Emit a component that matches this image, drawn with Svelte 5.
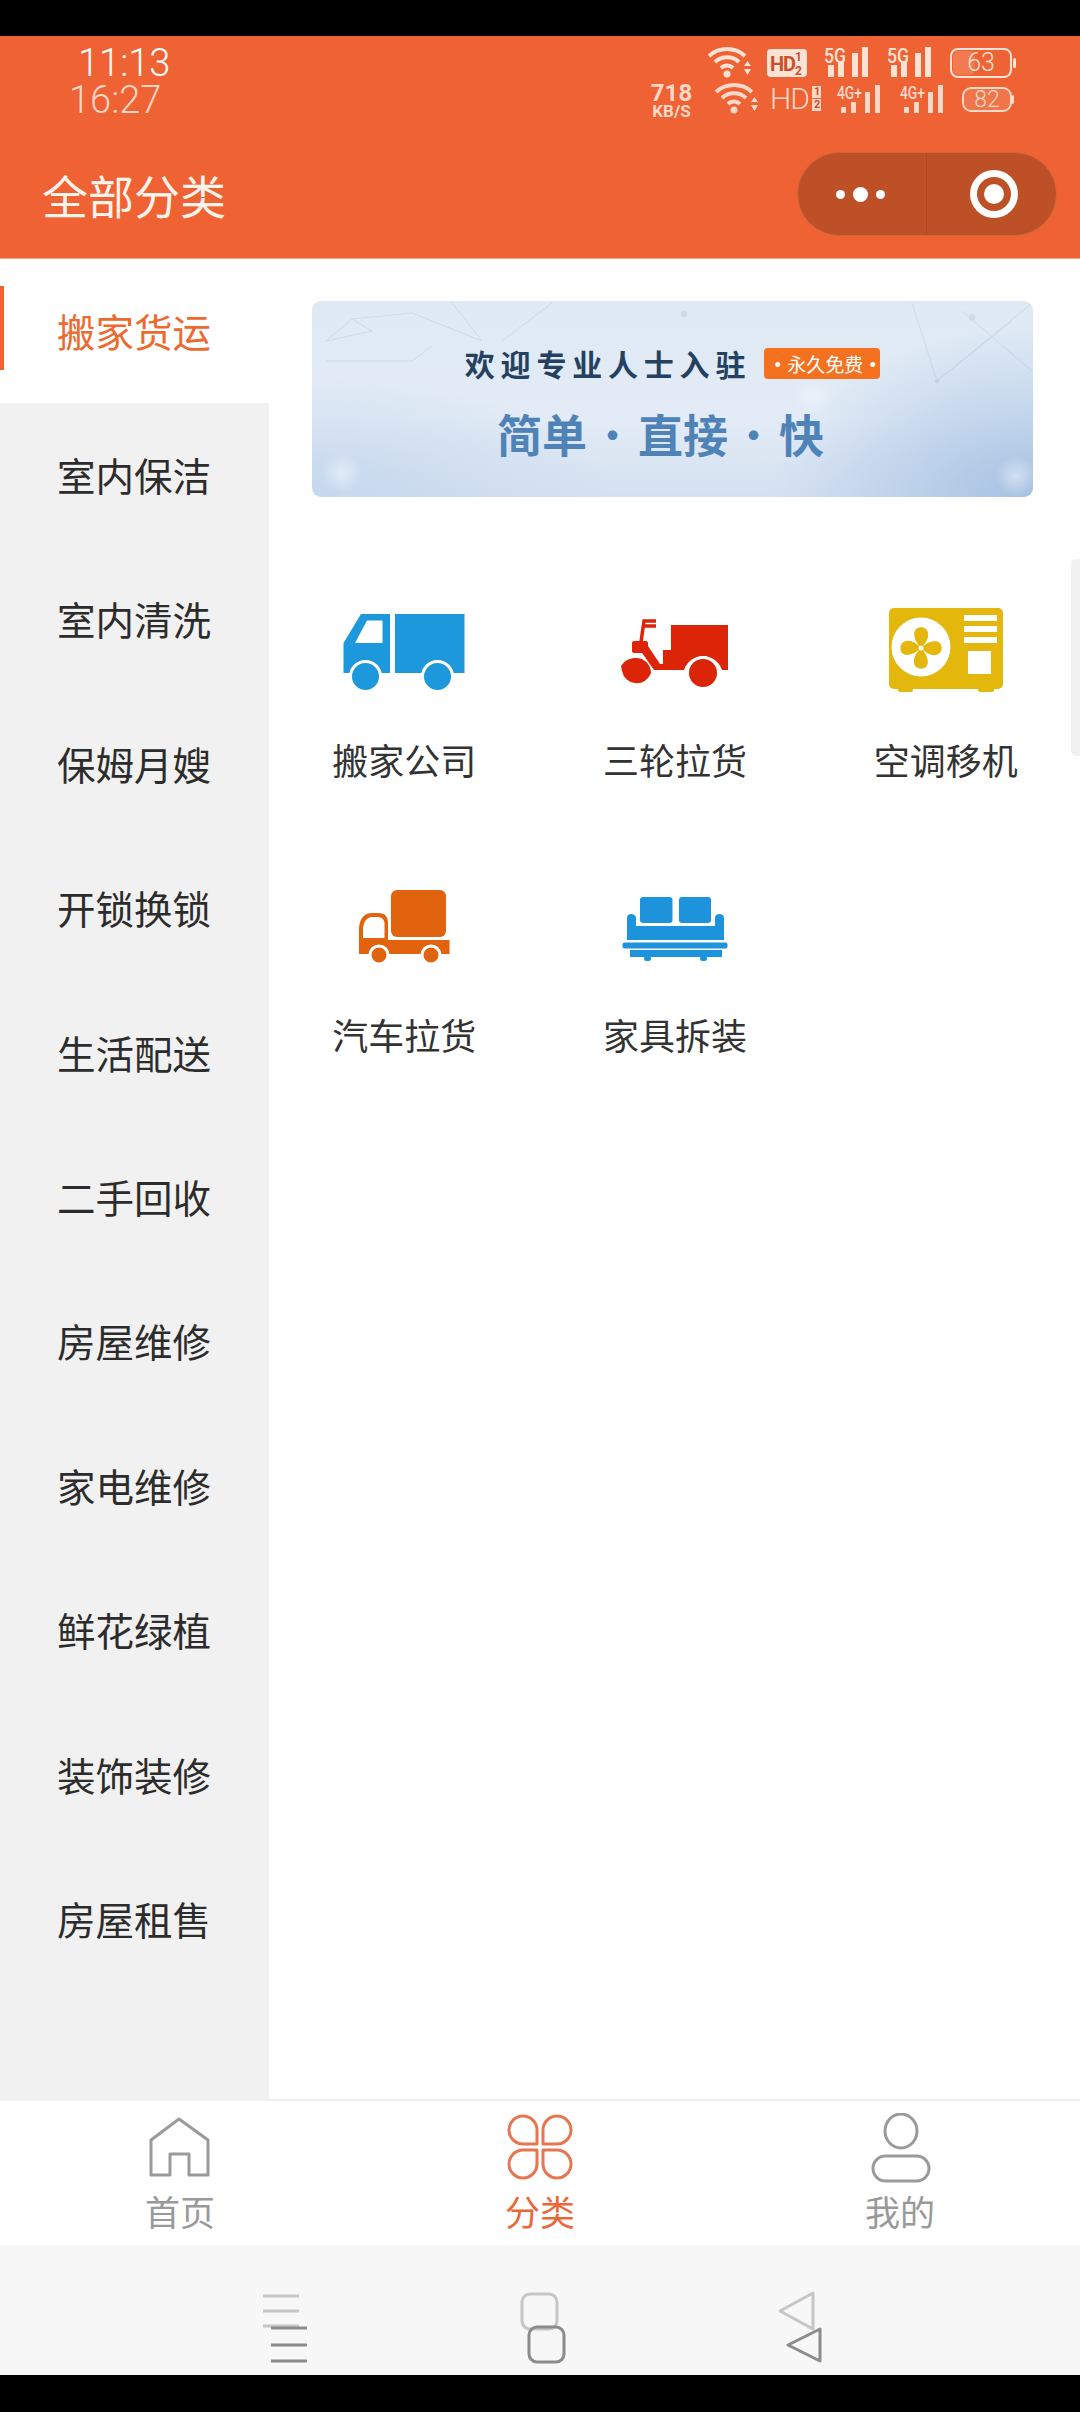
<script>
  const cats = ['搬家货运','室内保洁','室内清洗','保姆月嫂','开锁换锁','生活配送','二手回收','房屋维修','家电维修','鲜花绿植','装饰装修','房屋租售'];
</script>

{#snippet wifi()}
  <svg class="ic" width="44" height="36" viewBox="0 0 44 36">
    <g fill="none" stroke="currentColor" stroke-width="4">
      <path d="M1 11A27 27 0 0 1 37 11"/>
      <path d="M7 17A17.500 17.500 0 0 1 31 17"/>
      <path d="M13 23A8.500 8.500 0 0 1 25 23"/>
    </g>
    <circle cx="19" cy="29" r="3.500" fill="currentColor"/>
    <path d="M36 21H43L39.500 16ZM36 24H43L39.500 30Z" fill="currentColor"/>
  </svg>
{/snippet}

{#snippet signal(label, w, fs, tl, bw, tops)}
  <svg class="ic" width={w} height="36" viewBox="0 0 {w} 36">
    <text class="sig" x="0" y="18" font-size={fs} textLength={tl} lengthAdjust="spacingAndGlyphs">{label}</text>
    <g fill="currentColor">
      <rect x="4" y={tops[0]} width={bw} height={32 - tops[0]}/>
      <rect x="14" y={tops[1]} width={bw} height={32 - tops[1]}/>
      <rect x="28" y={tops[2]} width={bw} height={32 - tops[2]}/>
      <rect x="38" y={tops[3]} width={bw} height={32 - tops[3]}/>
    </g>
  </svg>
{/snippet}

<div class="page">
  <div class="topblack"></div>

  <header class="head">
    <div class="status">
      <div class="times">
        <span class="t1">11:13</span>
        <span class="t2">16:27</span>
      </div>
      <div class="sysicons">
        <div class="sysrow r1">
          {@render wifi()}
          <svg class="ic hd" width="40" height="36" viewBox="0 0 40 36">
            <rect x="0" y="4" width="40" height="28" rx="4" fill="#fde3d6"/>
            <text class="hdt" x="3" y="26" fill="#c9502a">HD</text>
            <text class="hds" x="28" y="16" fill="#c9502a">1</text>
            <text class="hds" x="28" y="30" fill="#c9502a">2</text>
          </svg>
          {@render signal('5G', 46, 21, 22, 6, [20, 17, 8, 2])}
          {@render signal('5G', 46, 21, 22, 6, [20, 17, 8, 2])}
          <svg class="ic" width="66" height="36" viewBox="0 0 66 36">
            <rect x="1" y="4" width="60" height="28" rx="7" fill="none" stroke="currentColor" stroke-width="2"/>
            <rect x="3" y="6" width="22" height="24" rx="5" fill="#fde3d6" opacity=".18"/>
            <rect x="63" y="13" width="3" height="10" rx="1.500" fill="currentColor"/>
            <text class="bat" x="31" y="26">63</text>
          </svg>
        </div>
        <div class="sysrow r2">
          <div class="speed"><b>718</b><small>KB/S</small></div>
          <span class="m23">{@render wifi()}</span>
          <span class="hd2">HD<i><em>1</em><em>2</em></i></span>
          <span class="m17">{@render signal('4G+', 43, 18, 25, 5, [26, 21, 11, 4])}</span>
          <span class="m20">{@render signal('4G+', 43, 18, 25, 5, [26, 21, 11, 4])}</span>
          <svg class="ic m19" width="52" height="36" viewBox="0 0 52 36">
            <rect x="1" y="7" width="48" height="23" rx="8" fill="#fde3d6" fill-opacity=".15" stroke="currentColor" stroke-width="2"/>
            <rect x="49" y="14" width="3" height="9" rx="1.500" fill="currentColor"/>
            <text class="bat small" x="25" y="26">82</text>
          </svg>
        </div>
      </div>
    </div>
    <div class="titlebar">
      <h1>全部分类</h1>
      <div class="pill">
        <div class="pillpart dots"><i></i><i class="big"></i><i></i></div>
        <div class="pillpart target"><span class="ring"></span></div>
      </div>
    </div>
  </header>

  <div class="body">
    <nav class="side">
      {#each cats as c, i}
        <div class="cat" class:on={i === 0}>{c}</div>
      {/each}
    </nav>

    <main class="main">
      <div class="scrollbar"></div>
      <div class="banner">
        <svg class="net" width="721" height="196" viewBox="0 0 721 196" fill="none" stroke="#8fa6bf" stroke-width="1" opacity=".22">
          <path d="M14 40L40 18L100 12L170 40L140 2M14 60H100L120 45M40 18L60 30L14 40M190 40L240 2"/>
          <path d="M600 2L625 80L720 2M650 10L720 70M625 80L700 20"/>
          <circle cx="660" cy="16" r="3" fill="#8fa6bf"/><circle cx="372" cy="13" r="3" fill="#8fa6bf"/><circle cx="625" cy="80" r="2" fill="#8fa6bf"/>
        </svg>
        <div class="bline">
          <span class="bh">欢迎专业人士入驻</span>
          <span class="tag"><i>·</i>永久免费<i>·</i></span>
        </div>
        <div class="bsub"><span>简单</span><span class="mid">·</span><span>直接</span><span class="mid">·</span><span>快</span></div>
      </div>

      <div class="grid">
        <div class="item">
          <svg width="130" height="100" viewBox="0 0 130 100">
            <g fill="#1e98dc">
              <path d="M4.500 43L22 14H51V73H4.500Z"/>
              <rect x="56" y="14" width="69.500" height="59"/>
            </g>
            <path d="M16 43L28 20.500H43.500V43Z" fill="#fff"/>
            <g fill="#1e98dc" stroke="#fff" stroke-width="3">
              <circle cx="26.500" cy="76.500" r="15"/>
              <circle cx="98.500" cy="76.500" r="15"/>
            </g>
          </svg>
          <span>搬家公司</span>
        </div>
        <div class="item">
          <svg width="130" height="100" viewBox="0 0 130 100">
            <g fill="#dc2508">
              <path d="M38 46L50 64H53V50H61V25H118V70H112A20 20 0 0 0 74 70H44L30 50Z"/>
              <rect x="22" y="41" width="16" height="12" rx="2"/>
              <path d="M11 66C15 60 20 58 26 58C35 58 41 65 41 73A15 15 0 0 1 12 71Z"/>
            </g>
            <path d="M46 21H34L31 42M35 26H46" fill="none" stroke="#dc2508" stroke-width="3.500"/>
            <circle cx="93" cy="73" r="15.500" fill="#dc2508" stroke="#fff" stroke-width="3"/>
          </svg>
          <span>三轮拉货</span>
        </div>
        <div class="item">
          <svg width="130" height="100" viewBox="0 0 130 100">
            <g fill="#e3b70b">
              <rect x="8" y="8" width="114" height="81" rx="5"/>
              <rect x="17" y="85" width="15" height="7" rx="2"/>
              <rect x="97" y="85" width="16" height="7" rx="2"/>
            </g>
            <circle cx="40" cy="47" r="29.500" fill="#fff"/>
            <g fill="#e3b70b">
              <path d="M40 48C34 42 31 33 35 29C39 26 46 27 47 33C48 39 44 44 40 48Z"/>
              <path d="M40 48C34 42 31 33 35 29C39 26 46 27 47 33C48 39 44 44 40 48Z" transform="rotate(90 40 48)"/>
              <path d="M40 48C34 42 31 33 35 29C39 26 46 27 47 33C48 39 44 44 40 48Z" transform="rotate(180 40 48)"/>
              <path d="M40 48C34 42 31 33 35 29C39 26 46 27 47 33C48 39 44 44 40 48Z" transform="rotate(270 40 48)"/>
            </g>
            <circle cx="40" cy="48" r="2.500" fill="#fff"/>
            <g fill="#fff">
              <rect x="83" y="15" width="33" height="6"/>
              <rect x="83" y="26" width="33" height="6"/>
              <rect x="83" y="37" width="33" height="6"/>
              <rect x="87" y="51" width="23" height="23"/>
            </g>
          </svg>
          <span>空调移机</span>
        </div>
        <div class="item">
          <svg width="130" height="100" viewBox="0 0 130 100">
            <g fill="#e2630e">
              <rect x="52" y="15" width="55" height="47" rx="6"/>
              <path d="M20 79V55C20 44 25 38 33 38H40C46 38 49 42 49 48V65H110.500V79Z"/>
            </g>
            <path d="M24 63V55C24 47 28 42 33 42H39C43 42 45.500 45 45.500 49V63Z" fill="#fff"/>
            <g fill="#e2630e" stroke="#fff" stroke-width="3">
              <circle cx="40" cy="80" r="9"/>
              <circle cx="92" cy="80" r="9"/>
            </g>
          </svg>
          <span>汽车拉货</span>
        </div>
        <div class="item">
          <svg width="130" height="100" viewBox="0 0 130 100" fill="#1d93dc">
            <rect x="30" y="22" width="32.500" height="26" rx="3"/>
            <rect x="69" y="22" width="32" height="26" rx="3"/>
            <path d="M17 43C17 40 19 39 21 39S26 40 26 43V51H105V43C105 40 107 39 109.500 39S114 40 114 43V65H17Z"/>
            <rect x="12.500" y="67.500" width="105" height="6" rx="2"/>
            <rect x="20" y="75" width="92" height="7"/>
            <rect x="34" y="81" width="7" height="5" rx="2.500"/>
            <rect x="90" y="81" width="7" height="5" rx="2.500"/>
          </svg>
          <span>家具拆装</span>
        </div>
      </div>
    </main>
  </div>

  <footer class="tabs">
    <div class="tab">
      <svg width="80" height="72" viewBox="0 0 80 72" fill="none" stroke="#9a9a9a" stroke-width="3" stroke-linejoin="round">
        <path d="M11 62V27L39 6L68 27V62H49V41H30V62Z"/>
      </svg>
      <span>首页</span>
    </div>
    <div class="tab active">
      <svg width="80" height="72" viewBox="0 0 80 72" fill="none" stroke="#e5764f" stroke-width="3" stroke-linejoin="round">
        <path d="M37 31H23A14 14 0 1 1 37 17Z"/>
        <path d="M43 31H57A14 14 0 1 0 43 17Z"/>
        <path d="M37 37H23A14 14 0 1 0 37 51Z"/>
        <path d="M43 37H57A14 14 0 1 1 43 51Z"/>
      </svg>
      <span>分类</span>
    </div>
    <div class="tab">
      <svg width="80" height="72" viewBox="0 0 80 72" fill="none" stroke="#9a9a9a" stroke-width="3">
        <ellipse cx="41" cy="18" rx="16" ry="17"/>
        <rect x="13" y="43" width="56" height="25" rx="12.500"/>
      </svg>
      <span>我的</span>
    </div>
  </footer>

  <div class="navbar">
    <svg width="60" height="80" viewBox="0 0 60 80" fill="none" stroke-width="3">
      <path d="M8 7H44M8 22H44M8 37H44" stroke="#c6c6c6"/>
      <path d="M16 39H52M16 56H52M16 72H52" stroke="#8c8c8c"/>
    </svg>
    <svg width="60" height="80" viewBox="0 0 60 80" fill="none" stroke-width="3">
      <rect x="9" y="5" width="35" height="35" rx="8" stroke="#c6c6c6"/>
      <rect x="16" y="38" width="35" height="35" rx="8" stroke="#8c8c8c"/>
    </svg>
    <svg width="60" height="80" viewBox="0 0 60 80" fill="none" stroke-width="3" stroke-linejoin="round">
      <path d="M10 22L43 4V40Z" stroke="#c6c6c6"/>
      <path d="M18 56L50 40V72Z" stroke="#8c8c8c"/>
    </svg>
  </div>

  <div class="botblack"></div>
</div>

<style>
  :global(body) { margin: 0; background: #000; }
  .page {
    width: 1080px; height: 2412px; display: flex; flex-direction: column; overflow: hidden;
    background: #fff; color: #333;
    font-family: "Noto Sans CJK SC", "Noto Sans", sans-serif;
  }
  .topblack { height: 36px; background: #000; flex: none; }
  .botblack { flex: 1; background: #000; }

  .head { height: 223px; flex: none; background: #ef6233; display: flex; flex-direction: column; color: #fde3d6; box-sizing: border-box; border-bottom: 1px solid #f6a88c; }
  .status { height: 96px; display: flex; justify-content: space-between; padding-top: 9px; box-sizing: border-box; }
  .times { display: flex; flex-direction: column; font-family: Roboto, sans-serif; font-weight: 300; }
  .t1 { margin-left: 78px; color: #fff; font-size: 38px; height: 36px; line-height: 36px; }
  .t2 { margin-left: 69px; color: #fbd6c6; font-size: 38px; height: 36px; line-height: 38px; }

  .sysicons { display: flex; flex-direction: column; align-items: flex-end; }
  .sysrow { height: 36px; display: flex; }
  .r1 { gap: 17px; padding-right: 64px; }
  .r2 { padding-right: 66px; color: #fbd8c8; }
  .ic { display: block; flex: none; }
  .m23 { margin-left: 23px; }
  .m17 { margin-left: 17px; }
  .m20 { margin-left: 20px; }
  .m19 { margin-left: 19px; }
  .hd { margin-left: -2px; }
  .sig { font-family: Roboto, sans-serif; font-weight: 500; fill: currentColor; }
  .hdt { font: 700 20px "Roboto", sans-serif; letter-spacing: -1px; }
  .hds { font: 700 12px Roboto, sans-serif; }
  .bat { font: 300 25px Roboto, sans-serif; fill: currentColor; text-anchor: middle; }
  .bat.small { font-size: 23px; }
  .speed { width: 41px; display: flex; flex-direction: column; align-items: center; font-family: Roboto, sans-serif; margin-top: 1px; }
  .speed b { font-size: 24px; line-height: 22px; font-weight: 700; }
  .speed small { font-size: 17px; line-height: 15px; font-weight: 700; }
  .hd2 { margin-left: 11px; width: 50px; display: flex; align-items: center; font: 300 30px/36px Roboto, sans-serif; letter-spacing: -1px; }
  .hd2 i { display: flex; flex-direction: column; margin-left: 3px; font-style: normal; }
  .hd2 em { font: 700 11px/12px Roboto, sans-serif; font-style: normal; background: #fbd8c8; color: #c9502a; padding: 0 2px; margin-bottom: 1px; }

  .titlebar { flex: 1; display: flex; align-items: center; justify-content: space-between; padding: 0 23px 2px 42px; }
  h1 { margin: 0; font-size: 46px; line-height: 60px; font-weight: 400; color: #fff3ec; }
  .pill { width: 260px; height: 84px; box-sizing: border-box; border-radius: 42px; background: #bd5026; border: 1px solid #d5663c; display: flex; }
  .pillpart { display: flex; align-items: center; justify-content: center; }
  .dots { width: 129px; gap: 8px; border-right: 1px solid #b0481f; padding-right: 3px; box-sizing: border-box; }
  .dots i { width: 9px; height: 9px; border-radius: 50%; background: #fff; }
  .dots i.big { width: 15px; height: 15px; }
  .target { flex: 1; padding-left: 4px; }
  .ring { width: 48px; height: 48px; box-sizing: border-box; border-radius: 50%; background: #fff; position: relative; display: flex; align-items: center; justify-content: center; }
  .ring::before { content: ""; width: 34px; height: 34px; border-radius: 50%; background: #bd5026; position: absolute; }
  .ring::after { content: ""; width: 20px; height: 20px; border-radius: 50%; background: #fff; position: absolute; }

  .body { height: 1840px; flex: none; display: flex; }
  .side { width: 269px; flex: none; background: #f1f1f1; display: flex; flex-direction: column; }
  .cat { height: 144.400px; flex: none; display: flex; align-items: center; padding: 0 0 3px 57px; box-sizing: border-box; font-size: 38.500px; color: #2c2c2c; }
  .cat.on { background: #fff; color: #ec6a2f; position: relative; }
  .cat.on::before { content: ""; position: absolute; left: 0; top: 27px; width: 4px; height: 84px; background: #f2632f; }

  .main { flex: 1; position: relative; padding: 42px 0 0 43px; box-sizing: border-box; }
  .scrollbar { position: absolute; right: 0; top: 300px; width: 10px; height: 197px; background: #f1f1f1; border-radius: 5px 0 0 5px; }
  .banner {
    width: 721px; height: 196px; border-radius: 9px; position: relative; overflow: hidden;
    display: flex; flex-direction: column; align-items: center; padding-right: 24px; box-sizing: border-box;
    background:
      radial-gradient(20px 20px at 30px 172px, rgba(255,255,255,.45), transparent),
      radial-gradient(20px 20px at 704px 175px, rgba(255,255,255,.45), transparent),
      radial-gradient(20px 20px at 500px 95px, rgba(255,255,255,.3), transparent),
      radial-gradient(260px 170px at 100% 100%, #a6c2e3, transparent),
      radial-gradient(300px 120px at 0 100%, #c6d8ed, transparent),
      linear-gradient(#dfe9f4, #e2ebf6 60%, #d5e1f1);
  }
  .net { position: absolute; left: 0; top: 0; }
  .bline { position: relative; display: flex; align-items: center; margin-top: 47px; height: 31px; padding-left: 24px; }
  .bh { font-size: 30px; font-weight: 700; letter-spacing: 5.800px; color: #24425f; line-height: 31px; white-space: nowrap; }
  .tag { margin-left: 13px; width: 116px; height: 31px; border-radius: 4px; background: #f4711f; color: #fff; display: flex; align-items: center; justify-content: space-between; padding: 0 4px; box-sizing: border-box; font-size: 19px; white-space: nowrap; }
  .tag i { font-style: normal; font-weight: 700; }
  .bsub { position: relative; display: flex; align-items: center; margin-top: 27px; font-size: 45px; font-weight: 700; line-height: 56px; color: #4f83b8; }
  .mid { width: 51px; display: flex; justify-content: center; font-weight: 400; }

  .grid { display: grid; grid-template-columns: repeat(3, 270.670px); margin: 103px 0 0 -43px; row-gap: 91px; }
  .item { display: flex; flex-direction: column; align-items: center; }
  .item svg { display: block; }
  .item span { margin-top: 34px; font-size: 36px; line-height: 50px; color: #333; white-space: nowrap; }

  .tabs { height: 146px; flex: none; box-sizing: border-box; border-top: 2px solid #f0f0f0; display: grid; grid-template-columns: repeat(3, 360px); padding-top: 12px; background: #fff; }
  .tab { display: flex; flex-direction: column; align-items: center; color: #999; }
  .tab svg { display: block; }
  .tab span { font-size: 35px; line-height: 46px; margin-top: 3px; }
  .tab.active { color: #e8683a; }

  .navbar { height: 130px; flex: none; background: #f7f7f7; box-sizing: border-box; padding: 44px 0 0 5px; display: flex; justify-content: center; gap: 197.500px; }
  .navbar svg { display: block; }
</style>
